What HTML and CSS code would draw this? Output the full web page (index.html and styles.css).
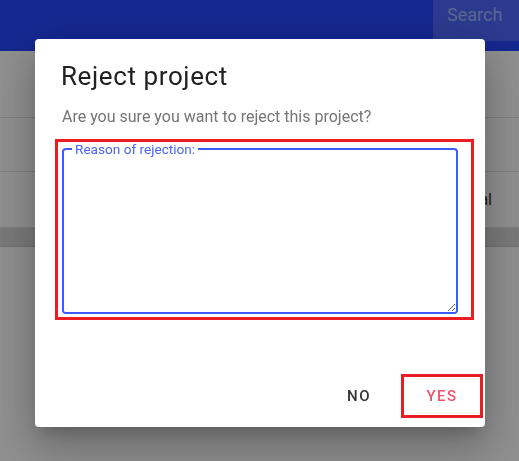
FILE: index.html
```html
<!DOCTYPE html>
<html lang="en">
<head>
    <meta charset="UTF-8">
    <meta name="viewport" content="width=device-width, initial-scale=1.0">
    <title>Reject project</title>
    <link rel="stylesheet" href="styles.css">
</head>
<body>
    <div class="page">
        <header class="topbar">
            <div class="search">Search</div>
        </header>
        <div class="toolbar"></div>
        <div class="row"></div>
        <div class="row row-text"><span>Total</span></div>
        <div class="band"></div>
    </div>

    <div class="backdrop"></div>

    <div class="dialog">
        <h2 class="dialog-title">Reject project</h2>
        <p class="dialog-text">Are you sure you want to reject this project?</p>

        <div class="highlight reason-box">
            <fieldset class="reason">
                <legend>Reason of rejection:</legend>
                <textarea class="reason-input"></textarea>
            </fieldset>
        </div>

        <div class="dialog-actions">
            <button class="btn btn-no">NO</button>
            <div class="highlight yes-box">
                <button class="btn btn-yes">YES</button>
            </div>
        </div>
    </div>
</body>
</html>
```

FILE: styles.css
```css
* {
    margin: 0;
    padding: 0;
    box-sizing: border-box;
    font-family: Roboto, "Liberation Sans", sans-serif;
}

body {
    background: #fff;
    overflow: hidden;
}

.topbar {
    height: 51px;
    background: #2547ff;
    display: flex;
    justify-content: flex-end;
    align-items: flex-start;
}

.search {
    width: 86px;
    height: 41px;
    background: #4d68ff;
    color: #a4b8ff;
    font-size: 18px;
    padding: 4px 0 0 14px;
}

.toolbar {
    height: 67px;
    border-bottom: 1px solid #e0e0e0;
}

.row {
    height: 54px;
    border-bottom: 1px solid #e0e0e0;
}

.row-text {
    height: 56px;
    display: flex;
    justify-content: flex-end;
    align-items: center;
    padding-right: 27px;
    font-size: 16px;
    color: #333;
}

.band {
    height: 19px;
    background: #d8d8d8;
    border-bottom: 1px solid #c8c8c8;
}

.backdrop {
    position: fixed;
    inset: 0;
    background: rgba(0, 0, 0, 0.44);
}

.dialog {
    position: fixed;
    left: 35px;
    top: 39px;
    width: 450px;
    height: 388px;
    background: #fff;
    border-radius: 4px;
    padding: 0 11px 10px 20px;
    box-shadow: 0 11px 15px -7px rgba(0,0,0,0.2), 0 24px 38px 3px rgba(0,0,0,0.14), 0 9px 46px 8px rgba(0,0,0,0.12);
}

.dialog-title {
    margin-top: 22px;
    padding-left: 6px;
    font-size: 26px;
    line-height: 30px;
    font-weight: 400;
    letter-spacing: 0.6px;
    color: #212121;
}

.dialog-text {
    margin-top: 16px;
    padding-left: 7px;
    font-size: 16px;
    line-height: 20px;
    color: #757575;
}

.highlight {
    border: 3px solid #ec1c24;
}

.reason-box {
    margin-top: 12px;
    padding: 0 13px 3px 4px;
}

.reason {
    border: 2px solid #3d5afe;
    border-radius: 4px;
    display: block;
}

.reason legend {
    margin-left: 8px;
    padding: 0 3px;
    font-size: 13.6px;
    line-height: 14px;
    color: #4a63f5;
}

.reason-input {
    display: block;
    width: 100%;
    height: 156px;
    border: none;
    outline: none;
    border-radius: 2px;
    font-size: 14px;
    resize: both;
}

.dialog-actions {
    margin-top: 54px;
    margin-right: -9px;
    display: flex;
    justify-content: flex-end;
    align-items: center;
    gap: 10px;
}

.btn {
    background: none;
    border: none;
    font-size: 15px;
    font-weight: 500;
    letter-spacing: 1.5px;
    height: 36px;
    min-width: 64px;
    padding: 0 16px;
    cursor: pointer;
}

.btn-no {
    color: #333;
}

.yes-box {
    width: 82px;
    height: 44px;
    display: flex;
    align-items: center;
    justify-content: center;
}

.btn-yes {
    color: #f0506e;
}
```
